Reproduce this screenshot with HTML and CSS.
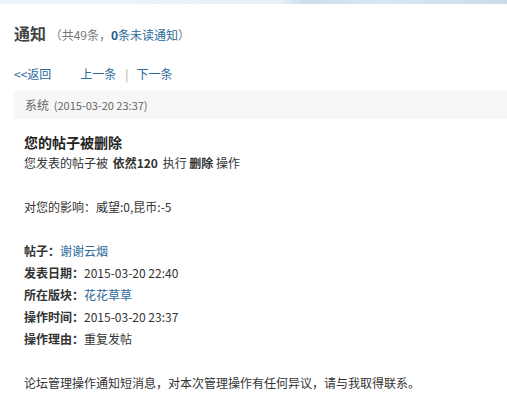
FILE: index.html
```html
<!DOCTYPE html>
<html lang="zh-CN">
<head>
    <meta charset="UTF-8">
    <title>通知</title>
    <link rel="stylesheet" href="styles.css">
</head>
<body>
    <div class="topband"></div>
    <div class="container">
        <h1 class="title">通知 <span class="count">（共49条，<a href="#"><strong>0</strong>条未读通知</a>）</span></h1>

        <div class="nav">
            <a href="#" class="back">&lt;&lt;返回</a>
            <a href="#">上一条</a>
            <span class="sep">|</span>
            <a href="#">下一条</a>
        </div>

        <div class="msg-head">系统 <span class="time">(2015-03-20 23:37)</span></div>

        <div class="msg-body">
            <h2>您的帖子被删除</h2>
            <p>您发表的帖子被 <b class="num">依然120</b> 执行 <b>删除</b> 操作</p>
            <p class="gap">对您的影响：威望:0,昆币:-5</p>
            <p class="gap"><b>帖子：</b><a href="#">谢谢云烟</a></p>
            <p><b>发表日期：</b>2015-03-20 22:40</p>
            <p><b>所在版块：</b><a href="#">花花草草</a></p>
            <p><b>操作时间：</b>2015-03-20 23:37</p>
            <p><b>操作理由：</b>重复发帖</p>
            <p class="gap">论坛管理操作通知短消息，对本次管理操作有任何异议，请与我取得联系。</p>
        </div>
    </div>
</body>
</html>
```

FILE: styles.css
```css
body {
    margin: 0;
    background: #fff;
    font-family: "Noto Sans CJK SC", "Liberation Sans", sans-serif;
    font-size: 12px;
    color: #333;
}
a {
    color: #2b6a9a;
    text-decoration: none;
}
.topband {
    height: 4px;
    background: linear-gradient(to right, #eef5fa 0%, #e6f1f8 55%, #c9deea 60%, #d8e8f2 75%, #c7dce8 100%);
}
.container {
    padding-left: 14px;
}
.title {
    margin: 0;
    padding-top: 19px;
    font-size: 16px;
    font-weight: bold;
    color: #444;
    line-height: 20px;
}
.count {
    font-size: 12px;
    font-weight: normal;
    color: #777;
}
.count strong {
    color: #1f5a8a;
}
.nav {
    margin-top: 21px;
    line-height: 16px;
    display: flex;
}
.nav a {
    color: #2b6a9a;
}
.nav .back {
    margin-right: 29px;
}
.nav .sep {
    color: #aaa;
    margin: 0 8px 0 9px;
}
.msg-head {
    margin-top: 9px;
    height: 28px;
    line-height: 28px;
    background: #f7f7f7;
    padding-left: 11px;
    color: #666;
}
.msg-head .time {
    font-size: 11px;
    margin-left: 2px;
}
.msg-body {
    padding: 13px 0 0 10px;
}
.msg-body h2 {
    margin: 0;
    font-size: 14px;
    font-weight: bold;
    line-height: 20px;
    color: #222;
}
.msg-body p {
    margin: 0;
    line-height: 22px;
}
.msg-body p.gap {
    margin-top: 22px;
}
.msg-body b {
    color: #333;
}
.msg-body .num {
    margin: 0 2px;
}
```
